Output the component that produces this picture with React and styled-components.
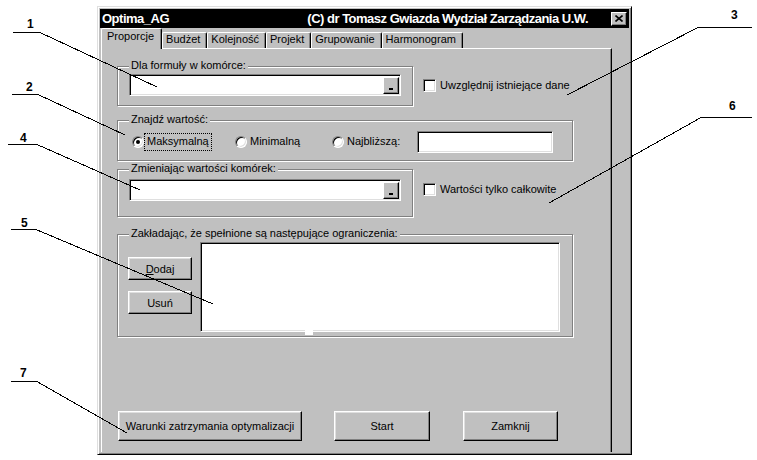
import React from 'react';
import styled, { createGlobalStyle } from 'styled-components';

const Global = createGlobalStyle`
  html, body { margin: 0; padding: 0; background: #fff; }
  body { font-family: "Liberation Sans", Arial, sans-serif; font-size: 11px; color: #000; }
  #root { width: 757px; height: 460px; overflow: hidden; }
`;

const Stage = styled.div`
  position: relative;
  width: 757px;
  height: 460px;
  box-sizing: border-box;
  padding: 6px 0 0 97px;
`;

const Window = styled.div`
  width: 535px;
  height: 449px;
  box-sizing: border-box;
  background: #c0c0c0;
  border: 1px solid;
  border-color: #dfdfdf #000 #000 #dfdfdf;
  box-shadow: inset 1px 1px #fff, inset -1px -1px #808080;
  padding: 2px;
  display: flex;
  flex-direction: column;
`;

const TitleBar = styled.div`
  height: 19px;
  flex: none;
  background: #000;
  color: #fff;
  display: flex;
  align-items: center;
  padding-left: 2px;
  font-weight: bold;
  font-size: 13px;
  letter-spacing: -0.5px;
  white-space: nowrap;
`;

const TitleRight = styled.span`
  margin-left: auto;
`;

const CloseBtn = styled.span`
  width: 16px;
  height: 14px;
  box-sizing: border-box;
  margin: 0 2px 0 23px;
  background: #c0c0c0;
  border: 1px solid;
  border-color: #fff #000 #000 #fff;
  box-shadow: inset -1px -1px #808080;
  display: flex;
  align-items: center;
  justify-content: center;
`;

const TabControl = styled.div`
  flex: 1;
  width: 511px;
  margin-left: 1px;
  display: flex;
  flex-direction: column;
`;

const TabStrip = styled.div`
  height: 20px;
  flex: none;
  display: flex;
  align-items: flex-end;
  padding-left: 2px;
`;

const Tab = styled.div`
  position: relative;
  box-sizing: border-box;
  height: ${p => (p.$active ? '21px' : '16px')};
  margin: ${p => (p.$active ? '0 0 -1px -2px' : '0')};
  padding: ${p => (p.$active ? '1px 7px 0 5px' : '0 6px 0 3px')};
  line-height: 13px;
  background: #c0c0c0;
  border-top: 1px solid #fff;
  border-left: 1px solid #fff;
  border-right: 1px solid #000;
  border-radius: 2px 2px 0 0;
  box-shadow: inset -1px 0 #808080;
  z-index: ${p => (p.$active ? 2 : 0)};
  white-space: nowrap;
`;

const Page = styled.div`
  flex: 1;
  border-top: 1px solid #fff;
  border-left: 1px solid #fff;
  border-right: 1px solid #000;
  box-shadow: inset -1px 0 #808080;
  display: flex;
  flex-direction: column;
  padding-left: 15px;
`;

const Row = styled.div`
  display: flex;
  align-items: flex-start;
  margin-top: ${p => p.$mt}px;
  margin-left: ${p => p.$ml || 0}px;
  gap: ${p => p.$gap || 0}px;
`;

const GroupBox = styled.div`
  position: relative;
  box-sizing: border-box;
  width: ${p => p.$w}px;
  height: ${p => p.$h}px;
  flex: none;
  border: 1px solid #808080;
  box-shadow: inset 1px 1px #fff, 1px 1px #fff;
  padding: ${p => p.$pad};
`;

const Caption = styled.span`
  position: absolute;
  top: -8px;
  left: 11px;
  padding: 0 2px;
  line-height: 13px;
  background: #c0c0c0;
  white-space: nowrap;
`;

const Sunken = styled.div`
  position: relative;
  box-sizing: border-box;
  width: ${p => p.$w}px;
  height: ${p => p.$h}px;
  flex: none;
  background: #fff;
  border: 1px solid;
  border-color: #808080 #fff #fff #808080;
  box-shadow: inset 1px 1px #000, inset -1px -1px #dfdfdf;
`;

const RefInput = styled(Sunken)`
  display: flex;
  justify-content: flex-end;
  align-items: center;
  padding-right: 1px;
`;

const RefButton = styled.span`
  width: 16px;
  height: 17px;
  box-sizing: border-box;
  background: #c0c0c0;
  border: 1px solid;
  border-color: #fff #000 #000 #fff;
  box-shadow: inset -1px -1px #808080;
  display: flex;
  justify-content: center;
  align-items: flex-end;
  padding: 0 1px 3px 0;
  &::after {
    content: '';
    width: 4px;
    height: 2px;
    background: #000;
  }
`;

const ListBox = styled(Sunken)`
  &::after {
    content: '';
    position: absolute;
    left: 104px;
    bottom: -4px;
    width: 8px;
    height: 5px;
    background: #fff;
  }
`;

const CheckRow = styled.label`
  display: flex;
  align-items: center;
  gap: 4px;
  margin-top: ${p => p.$mt}px;
  line-height: 13px;
  white-space: nowrap;
`;

const CheckBox = styled.span`
  width: 13px;
  height: 13px;
  box-sizing: border-box;
  flex: none;
  background: #fff;
  border: 1px solid;
  border-color: #808080 #fff #fff #808080;
  box-shadow: inset 1px 1px #000, inset -1px -1px #dfdfdf;
`;

const RadioGrid = styled.div`
  display: grid;
  grid-template-columns: 103px 97px 85px auto;
  align-items: center;
  height: 22px;
`;

const RadioOption = styled.label`
  display: flex;
  align-items: center;
  white-space: nowrap;
`;

const RadioDot = styled.span`
  width: 12px;
  height: 12px;
  box-sizing: border-box;
  flex: none;
  border-radius: 50%;
  background: #fff;
  border: 1px solid;
  border-color: #808080 #fff #fff #808080;
  box-shadow: inset 1px 1px #000, inset -1px -1px #dfdfdf;
  display: flex;
  align-items: center;
  justify-content: center;
  &::after {
    content: '';
    width: 4px;
    height: 4px;
    border-radius: 50%;
    background: ${p => (p.$checked ? '#000' : 'transparent')};
  }
`;

const RadioText = styled.span`
  border: 1px dotted ${p => (p.$focus ? '#000' : 'transparent')};
  padding: 1px 2px 2px 2px;
  line-height: 13px;
`;

const ButtonColumn = styled.div`
  display: flex;
  flex-direction: column;
  gap: 11px;
  margin-top: 15px;
  margin-right: 8px;
`;

const Button = styled.button`
  box-sizing: border-box;
  width: ${p => p.$w}px;
  height: ${p => p.$h}px;
  flex: none;
  padding: 0;
  font: inherit;
  color: #000;
  background: #c0c0c0;
  border: 1px solid;
  border-color: #fff #000 #000 #fff;
  box-shadow: inset -1px -1px #808080, inset 1px 1px #dfdfdf;
  border-radius: 0;
  white-space: nowrap;
`;

const Overlay = styled.svg`
  position: absolute;
  left: 0;
  top: 0;
  pointer-events: none;
  overflow: visible;
`;

const callouts = [
  { n: '1', tx: 27, ty: 28, hx1: 13, hx2: 40, hy: 32, ex: 157, ey: 87, left: true },
  { n: '2', tx: 26, ty: 91, hx1: 12, hx2: 38, hy: 94, ex: 125, ey: 135, left: true },
  { n: '4', tx: 20, ty: 142, hx1: 8, hx2: 37, hy: 144, ex: 140, ey: 190, left: true },
  { n: '5', tx: 21, ty: 227, hx1: 11, hx2: 36, hy: 229, ex: 213, ey: 304, left: true },
  { n: '7', tx: 20, ty: 377, hx1: 11, hx2: 37, hy: 381, ex: 127, ey: 433, left: true },
  { n: '3', tx: 731, ty: 19, hx1: 698, hx2: 752, hy: 27, ex: 567, ey: 95, left: false },
  { n: '6', tx: 729, ty: 110, hx1: 701, hx2: 752, hy: 117, ex: 549, ey: 203, left: false },
];

function Callouts() {
  return (
    <Overlay width="757" height="460" viewBox="0 0 757 460">
      {callouts.map(c => {
        const sx = c.left ? c.hx2 : c.hx1;
        return (
          <g key={c.n}>
            <text x={c.tx} y={c.ty} fontFamily="Liberation Sans, Arial, sans-serif" fontWeight="bold" fontSize="12" fill="#000">
              {c.n}
            </text>
            <line x1={c.hx1} y1={c.hy + 0.5} x2={c.hx2} y2={c.hy + 0.5} stroke="#000" strokeWidth="1" shapeRendering="crispEdges" />
            <line x1={sx} y1={c.hy + 0.5} x2={c.ex} y2={c.ey} stroke="#000" strokeWidth="1" shapeRendering="crispEdges" />
          </g>
        );
      })}
    </Overlay>
  );
}

export default function App() {
  return (
    <>
      <Global />
      <Stage>
        <Window>
          <TitleBar>
            <span>Optima_AG</span>
            <TitleRight>(C) dr Tomasz Gwiazda Wydział Zarządzania U.W.</TitleRight>
            <CloseBtn>
              <svg width="8" height="7" viewBox="0 0 8 7">
                <path d="M0.5 0.5 L7.5 6.5 M7.5 0.5 L0.5 6.5" stroke="#000" strokeWidth="1.6" />
              </svg>
            </CloseBtn>
          </TitleBar>
          <TabControl>
            <TabStrip>
              <Tab $active>Proporcje</Tab>
              <Tab>Budżet</Tab>
              <Tab>Kolejność</Tab>
              <Tab>Projekt</Tab>
              <Tab>Grupowanie</Tab>
              <Tab>Harmonogram</Tab>
            </TabStrip>
            <Page>
              <Row $mt={17} $gap={10}>
                <GroupBox $w={296} $h={40} $pad="7px 0 0 11px">
                  <Caption>Dla formuły w komórce:</Caption>
                  <RefInput $w={272} $h={22}>
                    <RefButton />
                  </RefInput>
                </GroupBox>
                <CheckRow $mt={13}>
                  <CheckBox />
                  Uwzględnij istniejące dane
                </CheckRow>
              </Row>

              <Row $mt={14}>
                <GroupBox $w={456} $h={41} $pad="10px 0 0 14px">
                  <Caption>Znajdź wartość:</Caption>
                  <RadioGrid>
                    <RadioOption>
                      <RadioDot $checked />
                      <RadioText $focus>Maksymalną</RadioText>
                    </RadioOption>
                    <RadioOption>
                      <RadioDot />
                      <RadioText>Minimalną</RadioText>
                    </RadioOption>
                    <RadioOption>
                      <RadioDot />
                      <RadioText>Najbliższą:</RadioText>
                    </RadioOption>
                    <Sunken $w={136} $h={22} />
                  </RadioGrid>
                </GroupBox>
              </Row>

              <Row $mt={8} $gap={10}>
                <GroupBox $w={296} $h={48} $pad="9px 0 0 11px">
                  <Caption>Zmieniając wartości komórek:</Caption>
                  <RefInput $w={272} $h={22}>
                    <RefButton />
                  </RefInput>
                </GroupBox>
                <CheckRow $mt={14}>
                  <CheckBox />
                  Wartości tylko całkowite
                </CheckRow>
              </Row>

              <Row $mt={17}>
                <GroupBox $w={456} $h={103} $pad="7px 0 0 10px">
                  <Caption>Zakładając, że spełnione są następujące ograniczenia:</Caption>
                  <Row $mt={0}>
                    <ButtonColumn>
                      <Button $w={64} $h={23}><u>D</u>odaj</Button>
                      <Button $w={64} $h={23}>Usuń</Button>
                    </ButtonColumn>
                    <ListBox $w={360} $h={90} />
                  </Row>
                </GroupBox>
              </Row>

              <Row $mt={74} $ml={1}>
                <Button $w={184} $h={30}>Warunki zatrzymania optymalizacji</Button>
                <Button $w={96} $h={30} style={{ marginLeft: 32 }}>Start</Button>
                <Button $w={95} $h={30} style={{ marginLeft: 33 }}>Zamknij</Button>
              </Row>
            </Page>
          </TabControl>
        </Window>
        <Callouts />
      </Stage>
    </>
  );
}
